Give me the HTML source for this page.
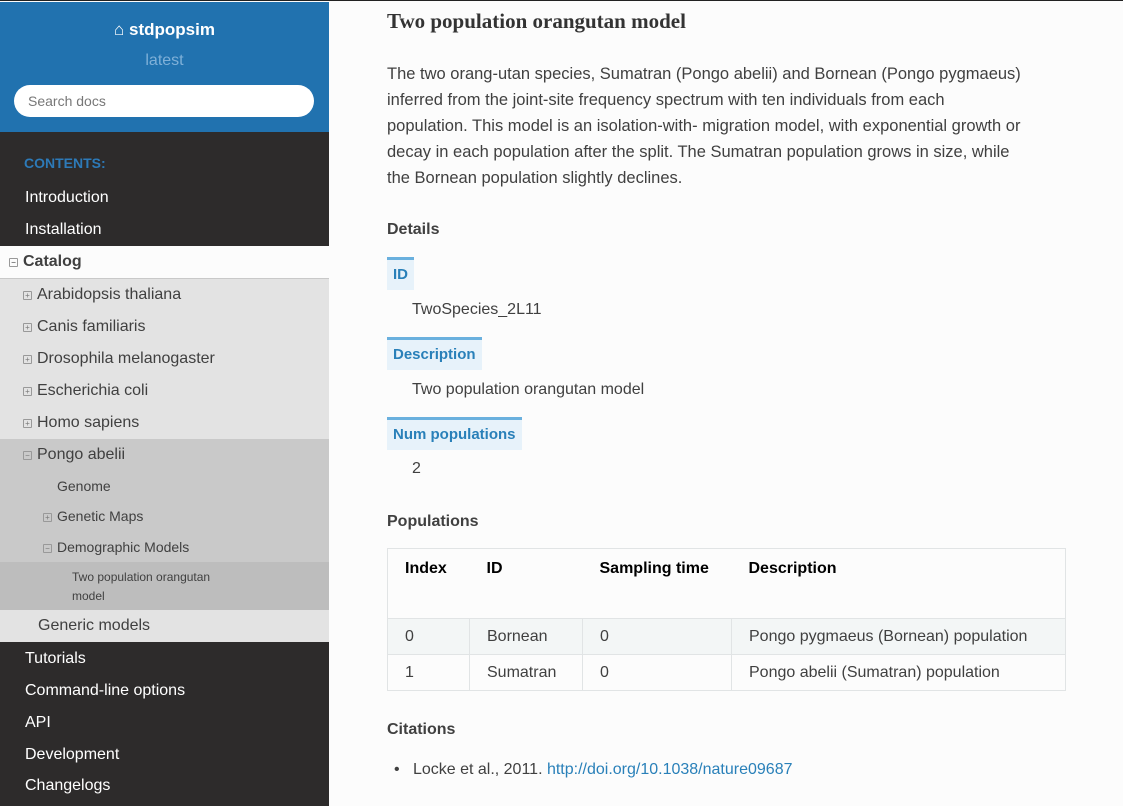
<!DOCTYPE html>
<html><head><meta charset="utf-8"><style>
*{box-sizing:border-box;margin:0;padding:0}
body{width:1123px;height:805px;overflow:hidden;background:#fcfcfc;font-family:"Liberation Sans",sans-serif;color:#404040;position:relative;border-top:1px solid #222}
.side{position:absolute;left:0;top:1px;width:329px;height:804px;background:#2d2b2b}
.hdr{position:absolute;left:0;top:0;width:329px;height:130px;background:#2172af;text-align:center;color:#fff}
.a{position:absolute;left:0;width:329px;font-size:16px;line-height:32px;white-space:nowrap}
.ab{color:#fff}
.ic{display:inline-block;width:9px;height:9px;border:1px solid #999;font-size:8px;line-height:7px;text-align:center;vertical-align:1px;margin-right:5px;color:#777;border-radius:1px}
.m{position:absolute;font-size:16px;line-height:26px;color:#404040}
.dt{position:absolute;left:387px;height:33px;background:#e7f2fa;border-top:3px solid #6ab0de;color:#2980b9;font-weight:bold;font-size:15px;line-height:29px;padding:0 6px}
table{position:absolute;left:387px;top:547px;width:679px;border-collapse:collapse;font-size:16px;color:#404040;border:1px solid #e1e4e5}
td,th{border:1px solid #e1e4e5;text-align:left;padding:0 17px}
th{height:70px;vertical-align:top;padding-top:11px;border-left:none;border-right:none;color:#000}
td{height:36px}
</style></head><body>
<div class="side">
 <div class="hdr">
  <div style="position:absolute;top:16px;width:100%;font-size:17px;font-weight:bold;line-height:24px">&#8962; stdpopsim</div>
  <div style="position:absolute;top:47px;width:100%;font-size:16px;color:#7fb0d8;line-height:24px">latest</div>
  <div style="position:absolute;left:14px;top:83px;width:300px;height:32px;background:#fff;border-radius:16px;text-align:left;padding-left:14px;color:#777;font-size:14px;line-height:32px">Search docs</div>
 </div>
 <div class="a" style="top:145px;color:#2d7ab8;font-weight:bold;font-size:14px;padding-left:24px">CONTENTS:</div>
 <div class="a ab" style="top:180px;padding-left:25px">Introduction</div>
 <div class="a ab" style="top:212px;padding-left:25px">Installation</div>
 <div class="a" style="top:244px;background:#fcfcfc;color:#404040;font-weight:bold;padding-left:9px;border-bottom:1px solid #c9c9c9"><span class="ic">−</span>Catalog</div>
 <div style="position:absolute;top:277px;left:0;width:329px;height:160px;background:#e3e3e3"></div>
 <div class="a" style="top:277px;padding-left:23px"><span class="ic">+</span>Arabidopsis thaliana</div>
 <div class="a" style="top:309px;padding-left:23px"><span class="ic">+</span>Canis familiaris</div>
 <div class="a" style="top:341px;padding-left:23px"><span class="ic">+</span>Drosophila melanogaster</div>
 <div class="a" style="top:373px;padding-left:23px"><span class="ic">+</span>Escherichia coli</div>
 <div class="a" style="top:405px;padding-left:23px"><span class="ic">+</span>Homo sapiens</div>
 <div style="position:absolute;top:437px;left:0;width:329px;height:124px;background:#c9c9c9"></div>
 <div class="a" style="top:437px;padding-left:23px"><span class="ic">−</span>Pongo abelii</div>
 <div class="a" style="top:469px;padding-left:57px;font-size:14px;line-height:30px">Genome</div>
 <div class="a" style="top:499px;padding-left:43px;font-size:14px;line-height:30px"><span class="ic">+</span>Genetic Maps</div>
 <div class="a" style="top:530px;padding-left:43px;font-size:14px;line-height:30px"><span class="ic">−</span>Demographic Models</div>
 <div style="position:absolute;top:560px;left:0;width:329px;height:48px;background:#bdbdbd;padding:6px 0 0 72px;font-size:12px;line-height:19px;color:#404040">Two population orangutan<br>model</div>
 <div class="a" style="top:608px;background:#e3e3e3;padding-left:38px">Generic models</div>
 <div class="a ab" style="top:641px;padding-left:25px">Tutorials</div>
 <div class="a ab" style="top:673px;padding-left:25px">Command-line options</div>
 <div class="a ab" style="top:705px;padding-left:25px">API</div>
 <div class="a ab" style="top:737px;padding-left:25px">Development</div>
 <div class="a ab" style="top:768px;padding-left:25px">Changelogs</div>
</div>
<div class="m" style="left:387px;top:7px;font-family:'Liberation Serif',serif;font-weight:bold;font-size:21px;line-height:26px;color:#333">Two population orangutan model</div>
<div class="m" style="left:387px;top:60px;white-space:nowrap;font-size:16.5px">The two orang-utan species, Sumatran (Pongo abelii) and Bornean (Pongo pygmaeus)<br>inferred from the joint-site frequency spectrum with ten individuals from each<br>population. This model is an isolation-with- migration model, with exponential growth or<br>decay in each population after the split. The Sumatran population grows in size, while<br>the Bornean population slightly declines.</div>
<div class="m" style="left:387px;top:216px;font-weight:bold">Details</div>
<div class="dt" style="top:256px">ID</div>
<div class="m" style="left:412px;top:296px">TwoSpecies_2L11</div>
<div class="dt" style="top:336px">Description</div>
<div class="m" style="left:412px;top:376px">Two population orangutan model</div>
<div class="dt" style="top:416px">Num populations</div>
<div class="m" style="left:412px;top:455px">2</div>
<div class="m" style="left:387px;top:508px;font-weight:bold">Populations</div>
<table>
<tr><th style="width:82px">Index</th><th style="width:113px">ID</th><th style="width:149px">Sampling time</th><th>Description</th></tr>
<tr style="background:#f3f6f6"><td>0</td><td>Bornean</td><td>0</td><td>Pongo pygmaeus (Bornean) population</td></tr>
<tr><td>1</td><td>Sumatran</td><td>0</td><td>Pongo abelii (Sumatran) population</td></tr>
</table>
<div class="m" style="left:387px;top:716px;font-weight:bold">Citations</div>
<div class="m" style="left:394px;top:756px">•&nbsp;&nbsp; Locke et al., 2011. <span style="color:#2980b9">http://doi.org/10.1038/nature09687</span></div>
</body></html>
